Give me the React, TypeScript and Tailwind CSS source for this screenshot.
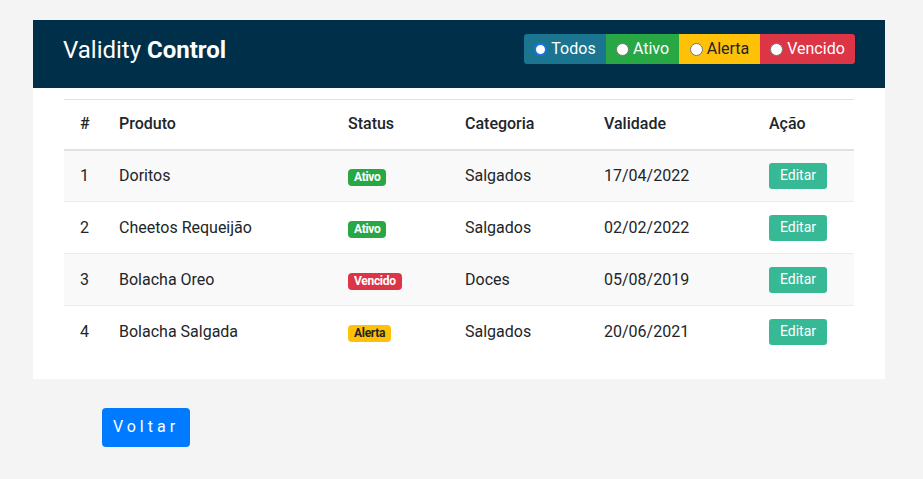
import React from "react";

type Row = { id: number; produto: string; status: "Ativo" | "Vencido" | "Alerta"; categoria: string; validade: string };

const rows: Row[] = [
  { id: 1, produto: "Doritos", status: "Ativo", categoria: "Salgados", validade: "17/04/2022" },
  { id: 2, produto: "Cheetos Requeijão", status: "Ativo", categoria: "Salgados", validade: "02/02/2022" },
  { id: 3, produto: "Bolacha Oreo", status: "Vencido", categoria: "Doces", validade: "05/08/2019" },
  { id: 4, produto: "Bolacha Salgada", status: "Alerta", categoria: "Salgados", validade: "20/06/2021" },
];

function Badge({ status }: { status: Row["status"] }) {
  const cls =
    status === "Ativo"
      ? "bg-[#28a745] text-white"
      : status === "Vencido"
      ? "bg-[#dc3545] text-white"
      : "bg-[#ffc107] text-[#212529]";
  return (
    <span className={`inline-block rounded-[4px] px-[6px] py-[2px] text-[12px] font-bold leading-[13px] tracking-[-0.3px] ${cls}`}>
      {status}
    </span>
  );
}

function Radio({ active }: { active?: boolean }) {
  return (
    <span
      className={`inline-block h-[13px] w-[13px] rounded-full bg-white ${
        active ? "border-2 border-[#1a73e8]" : "border border-[#767676]"
      }`}
    />
  );
}

export default function App() {
  return (
    <div className="min-h-[479px] w-full bg-[#f4f4f4] pt-5 text-[#212529]" style={{ fontFamily: "Roboto, 'Liberation Sans', sans-serif" }}>
      <div className="ml-[33px] w-[852px] bg-white pb-[21px]">
        <div className="flex h-[68px] items-center justify-between bg-[#003049] pb-[8px] pl-[30px] pr-[30px]">
          <h1 className="text-[24px] leading-none text-white">
            Validity <span className="font-bold">Control</span>
          </h1>
          <div className="-mt-[2px] flex h-[30px] text-[16px]">
            <label className="flex w-[82px] items-center justify-center gap-[4px] rounded-l-[3px] bg-[#1b7590] text-white">
              <Radio active /> Todos
            </label>
            <label className="flex w-[73px] items-center justify-center gap-[4px] bg-[#28a745] text-white">
              <Radio /> Ativo
            </label>
            <label className="flex w-[81px] items-center justify-center gap-[4px] bg-[#ffc107] text-[#212529]">
              <Radio /> Alerta
            </label>
            <label className="flex w-[95px] items-center justify-center gap-[4px] rounded-r-[3px] bg-[#dc3545] text-white">
              <Radio /> Vencido
            </label>
          </div>
        </div>
        <div className="px-[31px] pt-[11px]">
          <table className="w-[790px] table-fixed border-collapse text-[16px]">
            <colgroup>
              <col className="w-[39px]" />
              <col className="w-[229px]" />
              <col className="w-[117px]" />
              <col className="w-[139px]" />
              <col className="w-[165px]" />
              <col className="w-[101px]" />
            </colgroup>
            <thead>
              <tr className="h-[50px] border-t border-b-2 border-[#dee2e6] text-left">
                <th className="pl-4 font-medium">#</th>
                <th className="pl-4 font-medium">Produto</th>
                <th className="pl-4 font-medium">Status</th>
                <th className="pl-4 font-medium">Categoria</th>
                <th className="pl-4 font-medium">Validade</th>
                <th className="pl-4 font-medium">Ação</th>
              </tr>
            </thead>
            <tbody>
              {rows.map((r, i) => (
                <tr
                  key={r.id}
                  className={`h-[52px] ${i < rows.length - 1 ? "border-b border-[#e9ecef]" : ""} ${
                    i % 2 === 0 ? "bg-[#f9f9f9]" : "bg-white"
                  }`}
                >
                  <td className="pl-4">{r.id}</td>
                  <td className="pl-4">{r.produto}</td>
                  <td className="pl-4">
                    <Badge status={r.status} />
                  </td>
                  <td className="pl-4">{r.categoria}</td>
                  <td className="pl-4">{r.validade}</td>
                  <td className="pl-4">
                    <button className="h-[26px] w-[58px] rounded-[3px] bg-[#38b996] text-[14px] text-white">Editar</button>
                  </td>
                </tr>
              ))}
            </tbody>
          </table>
        </div>
      </div>
      <div className="ml-[102px] mt-[29px]">
        <button className="h-[39px] w-[88px] rounded-[4px] bg-[#007bff] text-[16px] tracking-[4px] text-white">
          Voltar
        </button>
      </div>
    </div>
  );
}
